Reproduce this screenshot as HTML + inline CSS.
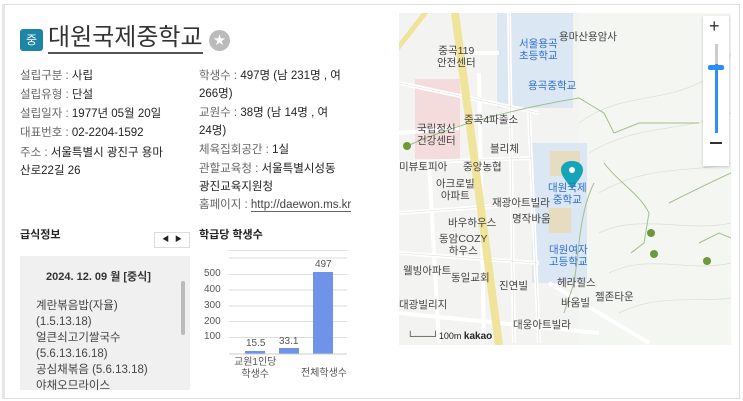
<!DOCTYPE html>
<html><head><meta charset="utf-8"><style>
*{margin:0;padding:0;box-sizing:border-box}
body{width:743px;height:401px;background:#fff;font-family:"Liberation Sans","Noto Sans CJK KR",sans-serif;position:relative;overflow:hidden;color:#222}
.a{position:absolute;white-space:nowrap}
.frame{position:absolute;left:2px;top:4px;width:738px;height:395px;border:1px solid #ddd;border-left:3px solid #e6e6e6}
.lb{color:#666}
.f{font-size:11.5px}
.map{position:absolute;left:399px;top:13px;width:332px;height:332px;background:#f3f3f1;overflow:hidden}
.m{position:absolute;font-size:10.5px;color:#444;white-space:nowrap;line-height:12px}
.mb{color:#2d6fd0}
</style></head><body>
<div class="frame"></div>
<div class="a" style="left:20px;top:29px;width:23px;height:22px;background:#1e84a8;border-radius:3px;color:#fff;font-size:12px;text-align:center;line-height:22px">중</div>
<div class="a" style="left:48px;top:24px;font-size:24px;color:#333;border-bottom:2px solid #555;line-height:28px">대원국제중학교</div>
<div class="a" style="left:209px;top:30px;width:21px;height:21px;border-radius:50%;background:#bbb;color:#fff;font-size:12px;text-align:center;line-height:21px">★</div>

<div class="a f" style="left:20px;top:67px"><span class="lb">설립구분 : </span> 사립</div>
<div class="a f" style="left:20px;top:86px"><span class="lb">설립유형 : </span> 단설</div>
<div class="a f" style="left:20px;top:105px"><span class="lb">설립일자 : </span>  1977년 05월 20일</div>
<div class="a f" style="left:20px;top:124px"><span class="lb">대표번호 : </span> 02-2204-1592</div>
<div class="a f" style="left:20px;top:144px"><span class="lb">주소 : </span> 서울특별시 광진구 용마</div>
<div class="a f" style="left:20px;top:162px">산로22길 26</div>

<div class="a f" style="left:199px;top:67px"><span class="lb">학생수 : </span>  497명 (남 231명 , 여</div>
<div class="a f" style="left:199px;top:85px">266명)</div>
<div class="a f" style="left:199px;top:104px"><span class="lb">교원수 : </span>  38명 (남 14명 , 여</div>
<div class="a f" style="left:199px;top:122px">24명)</div>
<div class="a f" style="left:199px;top:141px"><span class="lb">체육집회공간 : </span> 1실</div>
<div class="a f" style="left:199px;top:160px"><span class="lb">관할교육청 : </span> 서울특별시성동</div>
<div class="a f" style="left:199px;top:178px">광진교육지원청</div>
<div class="a f" style="left:199px;top:196px"><span class="lb">홈페이지 : </span> <span style="color:#444;border-bottom:1px solid #666">http://daewon.ms.kr</span></div>

<div class="a" style="left:20px;top:226px;font-size:11px;font-weight:bold">급식정보</div>
<div class="a" style="left:154px;top:232px;width:36px;height:16px;border:1px solid #ddd;font-size:7px;text-align:center;line-height:14px">◀ &nbsp; ▶</div>
<div class="a" style="left:20px;top:256px;width:170px;height:134px;background:#f0f0f0;overflow:hidden">
<div class="a" style="left:26px;top:12px;font-size:11px;font-weight:bold;color:#333">2024. 12. 09 월 [중식]</div>
<div class="a" style="left:161px;top:25px;width:4px;height:54px;background:#bbb;border-radius:2px"></div>
<div class="a" style="left:16px;top:42px;font-size:11.5px;color:#444;line-height:16px;white-space:normal;width:140px">계란볶음밥(자율)<br>(1.5.13.18)<br>얼큰쇠고기쌀국수<br>(5.6.13.16.18)<br>공심채볶음 (5.6.13.18)<br>야채오므라이스</div>
</div>

<div class="a" style="left:199px;top:226px;font-size:11px;font-weight:bold">학급당 학생수</div>
<svg class="a" style="left:199px;top:250px" width="160" height="110">
<g stroke="#ddd" stroke-width="1"><line x1="30" y1="0.5" x2="148" y2="0.5"/><line x1="30" y1="8" x2="148" y2="8"/><line x1="30" y1="24.5" x2="148" y2="24.5"/><line x1="30" y1="40" x2="148" y2="40"/><line x1="30" y1="56" x2="148" y2="56"/><line x1="30" y1="71.5" x2="148" y2="71.5"/><line x1="30" y1="87.5" x2="148" y2="87.5"/></g>
<g font-size="10" fill="#555" font-family="Liberation Sans">
<text x="5" y="26">500</text><text x="5" y="42">400</text><text x="5" y="58">300</text><text x="5" y="74">200</text><text x="5" y="89">100</text>
<text x="47" y="96">15.5</text><text x="80" y="94">33.1</text><text x="116" y="17">497</text></g>
<rect x="46" y="101" width="20" height="3" fill="#6f93e8"/>
<rect x="80" y="98" width="20" height="6" fill="#6f93e8"/>
<rect x="114" y="22" width="20" height="82" fill="#6f93e8"/>
<line x1="30" y1="104" x2="148" y2="104" stroke="#ccc"/>
</svg>
<div class="a" style="left:234px;top:357px;font-size:10px;color:#555;text-align:center;line-height:12px">교원1인당<br>학생수</div>
<div class="a" style="left:301px;top:364px;font-size:10px;color:#555">전체학생수</div>

<div class="map">
<svg width="332" height="332" style="position:absolute;left:0;top:0">
<rect x="180" y="0" width="152" height="332" fill="#f4f6f2"/>
<rect x="98" y="0" width="76" height="95" fill="#dbe7f2"/>
<rect x="133" y="130" width="55" height="140" fill="#dbe7f2"/>
<rect x="16" y="66" width="45" height="80" fill="#f5dcdc"/>
<rect x="151" y="138" width="30" height="25" fill="#e8dcc0"/>
<rect x="150" y="195" width="22" height="25" fill="#e8dcc0"/>
<g stroke="#fff" stroke-width="4" fill="none">
<path d="M0 70 L140 100"/><path d="M0 150 L133 145"/><path d="M0 200 L140 190"/><path d="M0 240 L140 250"/><path d="M0 300 L200 320"/><path d="M110 0 L115 330"/><path d="M130 100 L140 330"/><path d="M150 270 L250 330"/><path d="M0 120 L60 115"/><path d="M70 40 L100 40"/><path d="M80 60 L85 330"/><path d="M30 150 L40 330"/>
</g>
<g stroke="#e0e0e0" stroke-width="0.6" fill="none">
<path d="M0 70 L140 100"/><path d="M0 150 L133 145"/><path d="M0 200 L140 190"/><path d="M0 240 L140 250"/><path d="M110 0 L115 330"/><path d="M130 100 L140 330"/>
</g>
<g stroke="#d6e2cf" stroke-width="0.7" fill="none">
<path d="M180 110 C220 80 260 90 300 70 C320 60 330 50 332 40"/><path d="M190 140 C240 110 280 120 332 100"/><path d="M200 180 C250 150 300 160 332 150"/><path d="M200 220 C240 200 290 220 332 210"/><path d="M210 260 C250 240 290 260 332 250"/><path d="M220 300 C260 280 300 290 332 285"/>
</g>
<g stroke="#9fc08a" stroke-width="1" fill="none">
<path d="M8 133 C60 110 120 95 180 85 L205 100 L215 120 L240 110 L300 110"/><path d="M205 150 C220 170 240 180 250 200 L245 230 L232 240"/><path d="M195 170 C180 200 180 240 175 270 L165 300"/><path d="M270 190 C290 180 310 170 332 160"/><path d="M300 230 L320 220 L332 225"/>
</g>
<g fill="#6b9a3a"><circle cx="8" cy="133" r="4"/><circle cx="252" cy="220" r="4"/><circle cx="255" cy="241" r="4"/><circle cx="308" cy="248" r="4"/></g>
<path d="M56 0 L100 332" stroke="#f0e39a" stroke-width="8"/>
<path d="M-5 40 L30 -5" stroke="#f0e39a" stroke-width="5"/>
<path d="M173 148 C165 148 162 153 162 157 C162 163 169 170 173 176 C177 170 184 163 184 157 C184 153 181 148 173 148Z" fill="#15a4b8"/>
<circle cx="173" cy="157" r="3" fill="#fff"/>
</svg>
<div class="m" style="left:38px;top:32px;text-align:center">중곡119<br>안전센터</div>
<div class="m mb" style="left:120px;top:25px;text-align:center">서울용곡<br>초등학교</div>
<div class="m mb" style="left:129px;top:67px">용곡중학교</div>
<div class="m" style="left:160px;top:18px">용마산용암사</div>
<div class="m" style="left:65px;top:101px">중곡4파출소</div>
<div class="m" style="left:18px;top:110px;text-align:center">국립정신<br>건강센터</div>
<div class="m" style="left:91px;top:130px">블리체</div>
<div class="m" style="left:0px;top:148px">미뷰토피아</div>
<div class="m" style="left:64px;top:148px">중앙농협</div>
<div class="m mb" style="left:149px;top:169px;text-align:center">대원국제<br>중학교</div>
<div class="m" style="left:37px;top:165px;text-align:center">아크로빌<br>아파트</div>
<div class="m" style="left:93px;top:184px">재광아트빌라</div>
<div class="m" style="left:49px;top:204px">바우하우스</div>
<div class="m" style="left:113px;top:200px">명작바움</div>
<div class="m" style="left:40px;top:220px;text-align:center">동암COZY<br>하우스</div>
<div class="m mb" style="left:150px;top:231px;text-align:center">대원여자<br>고등학교</div>
<div class="m" style="left:4px;top:252px">웰빙아파트</div>
<div class="m" style="left:52px;top:259px">동일교회</div>
<div class="m" style="left:100px;top:267px">진연빌</div>
<div class="m" style="left:158px;top:264px">헤라힐스</div>
<div class="m" style="left:196px;top:278px">젤존타운</div>
<div class="m" style="left:0px;top:286px">대광빌리지</div>
<div class="m" style="left:162px;top:284px">바움빌</div>
<div class="m" style="left:114px;top:306px">대웅아트빌라</div>
<div class="m" style="left:8px;top:317px;font-size:9px;color:#222">└───┘100m <b style="font-size:10px">kakao</b></div>
</div>
<div class="a" style="left:703px;top:16px;width:26px;height:150px;background:#fff;box-shadow:0 1px 3px rgba(0,0,0,.2)">
<div class="a" style="left:6px;top:0px;font-size:18px;color:#333">+</div>
<div class="a" style="left:12px;top:30px;width:3px;height:87px;background:#2f8cff"></div>
<div class="a" style="left:12px;top:28px;width:3px;height:20px;background:#ccc"></div>
<div class="a" style="left:5px;top:49px;width:16px;height:5px;background:#2f8cff;border-radius:2px"></div>
<div class="a" style="left:7px;top:126px;width:12px;height:2px;background:#333"></div>
</div>
</body></html>
